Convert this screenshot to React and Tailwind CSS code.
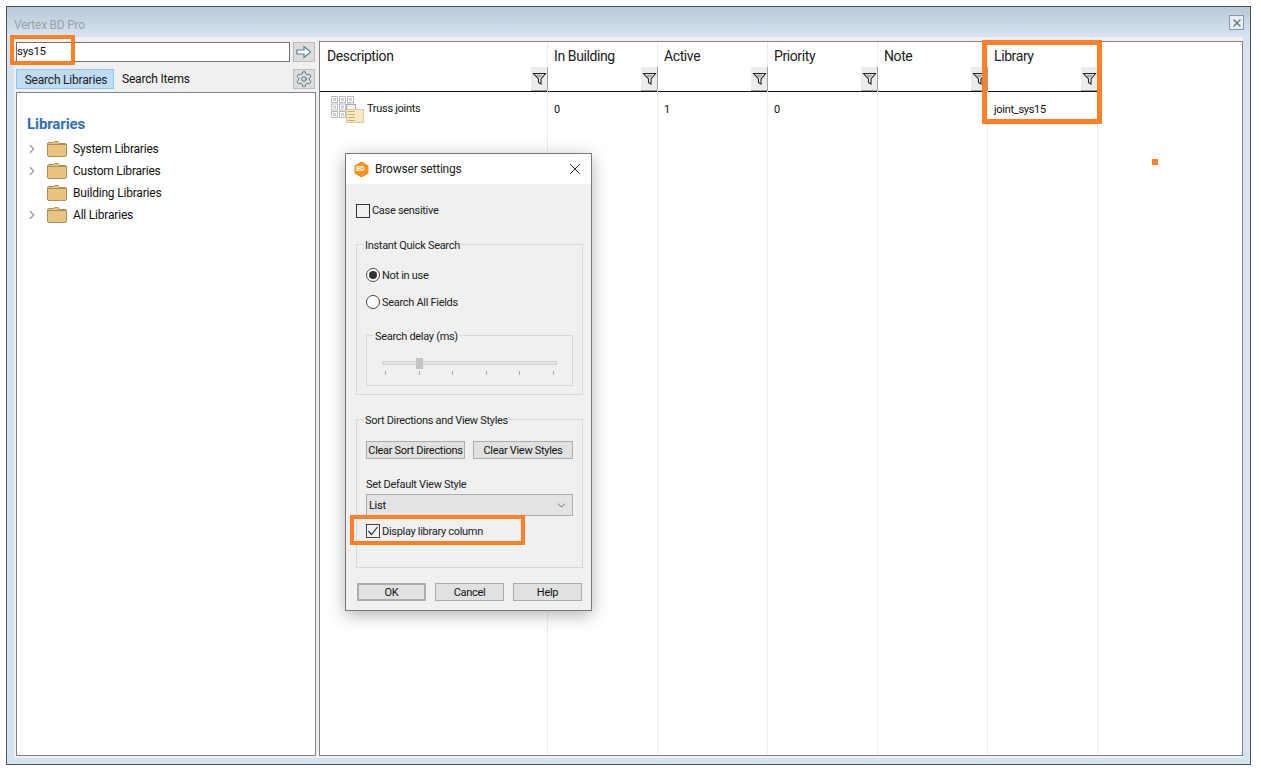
import React from "react";
import { ChevronRight, ChevronDown, X, Settings } from "lucide-react";

function Filter() {
  return (
    <div className="w-[17px] h-[24px] -mr-px bg-[#ececec] border-r border-b border-[#a0a0a0] flex items-center justify-center">
      <svg width="15" height="15" viewBox="0 0 15 15" fill="none">
        <path d="M1.5 2.5 H13.5 L9 8 V13 L6.5 11.5 V8 Z" fill="#fff" stroke="#222" strokeWidth="1.1" />
        <path d="M3.5 3.5 H11 L8.5 6.5 H6 Z" fill="#aaa" />
      </svg>
    </div>
  );
}

function Folder() {
  return (
    <svg width="20" height="16" viewBox="0 0 20 16" className="shrink-0">
      <path d="M.5 3 Q.5 1.5 2 1.5 H6.5 L8 0.5 H11 L12 2.5 H18 Q19.5 2.5 19.5 4 V14 Q19.5 15.5 18 15.5 H2 Q.5 15.5 .5 14 Z" fill="#e9c47f" stroke="#b08d5c" />
      <path d="M.5 3.5 H19.5" stroke="#b08d5c" strokeWidth="1" />
    </svg>
  );
}

function TreeRow({ label, arrow = true }) {
  return (
    <div className="flex items-center h-[22px]">
      <div className="w-[29px] pl-[7px] shrink-0">
        {arrow && <ChevronRight size={14} strokeWidth={2.2} className="text-[#9a9a9a]" />}
      </div>
      <Folder />
      <span className="ml-[6px] text-[12px] tracking-[-0.2px] text-[#111]">{label}</span>
    </div>
  );
}

function Col({ title, width, cell, cellClass = "", children }) {
  return (
    <div className={`${width} shrink-0 flex flex-col border-r border-[#e8eef5]`}>
      <div className="h-[50px] shrink-0 border-b border-[#111] flex flex-col pl-[6px]">
        <div className="text-[14px] tracking-[-0.4px] leading-[19px] pt-[5px] text-[#222] h-[25px]">{title}</div>
        <div className="flex justify-end"><Filter /></div>
      </div>
      <div className={`pl-[6px] pt-[10px] text-[11px] tracking-[-0.3px] leading-[15px] text-[#111] ${cellClass}`}>{cell}{children}</div>
    </div>
  );
}

function TrussIcon() {
  const cells = [0, 1, 2, 3, 4, 5, 6, 7, 8];
  return (
    <div className="relative w-[36px] h-[28px] shrink-0">
      <svg width="36" height="28" viewBox="0 0 36 28">
        {cells.map((c) => (
          <rect key={c} x={1.5 + (c % 3) * 8} y={.5 + Math.floor(c / 3) * 7.5} width="6" height="6" fill="#fff" stroke="#bcbcbc" />
        ))}
        {cells.map((c) => (
          <rect key={"i" + c} x={3 + (c % 3) * 8} y={2 + Math.floor(c / 3) * 7.5} width="3" height="3" fill="#cfcfcf" />
        ))}
        <rect x="16.5" y="8.5" width="9" height="18" fill="#f3f3f3" stroke="#a9a9a9" />
        <rect x="16.5" y="13.5" width="17" height="13" fill="#f8e8c8" stroke="#dcc79f" />
        <path d="M18 15.5h7M18 18.5h7M18 21.5h7M18 24.5h7" stroke="#cdb25e" />
      </svg>
    </div>
  );
}

function Legend({ children, className = "" }) {
  return <div className={`absolute -top-[7px] left-[7px] bg-[#f0f0f0] px-px leading-[15px] text-[#222] whitespace-nowrap ${className}`}>{children}</div>;
}

function Btn({ children, className = "" }) {
  return <div className={`h-[18px] flex items-center justify-center bg-[#e1e1e1] border border-[#adadad] text-[#111] whitespace-nowrap pt-[2px] ${className}`}>{children}</div>;
}

function Dialog() {
  return (
    <div className="absolute left-[345px] top-[153px] w-[247px] h-[458px] bg-[#f0f0f0] border border-[#777] shadow-[0_4px_16px_rgba(0,0,0,0.3)] text-[11px] tracking-[-0.3px] flex flex-col">
      <div className="h-[30px] bg-white shrink-0 flex items-center pl-[7px] pr-[7px]">
        <svg width="17" height="17" viewBox="0 0 17 17" className="shrink-0">
          <path d="M8.5 .5 L15.5 4.5 V12.5 L8.5 16.5 L1.5 12.5 V4.5 Z" fill="#f6921e" />
        </svg>
        <span className="absolute left-[10px] top-[11px] text-[6.5px] tracking-normal font-bold leading-[8px] text-white">BD</span>
        <span className="ml-[5px] text-[12px] tracking-[-0.2px] text-[#222]">Browser settings</span>
        <X size={18} strokeWidth={1.2} className="ml-auto text-[#111]" />
      </div>
      <div className="flex-1 flex flex-col pl-[10px] pr-[8px]">
        <div className="flex items-center h-[15px] mt-[19px]">
          <div className="w-[14px] h-[14px] border border-[#333] bg-transparent" />
          <span className="ml-[2px] mt-[2px] text-[#222]">Case sensitive</span>
        </div>
        <div className="relative mt-[26px] h-[151px] border border-[#d9d9d9] px-[9px]">
          <Legend>Instant Quick Search</Legend>
          <div className="flex items-center h-[14px] mt-[23px]">
            <div className="w-[14px] h-[14px] rounded-full border border-[#444] bg-white flex items-center justify-center">
              <div className="w-[8px] h-[8px] rounded-full bg-[#333]" />
            </div>
            <span className="ml-[2px] mt-[2px] text-[#222]">Not in use</span>
          </div>
          <div className="flex items-center h-[14px] mt-[13px]">
            <div className="w-[14px] h-[14px] rounded-full border border-[#444] bg-white" />
            <span className="ml-[2px] mt-[2px] text-[#222]">Search All Fields</span>
          </div>
          <div className="relative mt-[26px] h-[51px] border border-[#d9d9d9] px-[15px]">
            <Legend>Search delay (ms)</Legend>
            <div className="relative mt-[25px] h-[4px] bg-[#e3e3e3] border border-[#d2d2d2]">
              <div className="absolute left-[33px] -top-[4px] w-[7px] h-[11px] bg-[#c4c4c4]" />
            </div>
            <div className="flex justify-between mt-[6px] px-[3px]">
              {[0, 1, 2, 3, 4, 5].map((i) => (
                <div key={i} className="w-px h-[4px] bg-[#a8a8a8]" />
              ))}
            </div>
          </div>
        </div>
        <div className="relative mt-[24px] h-[149px] border border-[#d9d9d9] px-[9px]">
          <Legend>Sort Directions and View Styles</Legend>
          <div className="flex gap-[8px] mt-[21px]">
            <Btn className="w-[100px]">Clear Sort Directions</Btn>
            <Btn className="w-[101px]">Clear View Styles</Btn>
          </div>
          <div className="mt-[18px] leading-[15px] text-[#222]">Set Default View Style</div>
          <div className="mt-[2px] w-[207px] h-[22px] bg-[#e3e3e3] border border-[#adadad] flex items-center px-[2px] text-[#111]">
            <span className="mt-[3px]">List</span>
            <ChevronDown size={13} strokeWidth={1.5} className="ml-auto mr-[2px] text-[#555]" />
          </div>
          <div className="flex items-center h-[14px] mt-[8px]">
            <div className="w-[14px] h-[14px] border border-[#444] bg-transparent flex items-center justify-center">
              <svg width="12" height="12" viewBox="0 0 12 12" fill="none"><path d="M1.5 6 L4.5 9.5 L10.5 2" stroke="#333" strokeWidth="1.2" /></svg>
            </div>
            <span className="ml-[2px] mt-[2px] text-[#222]">Display library column</span>
          </div>
        </div>
        <div className="flex justify-between mt-[15px] pl-px pr-px">
          <Btn className="w-[69px] border-2 border-[#0078d7]">OK</Btn>
          <Btn className="w-[69px]">Cancel</Btn>
          <Btn className="w-[69px]">Help</Btn>
        </div>
      </div>
    </div>
  );
}

export default function App() {
  return (
    <div className="relative w-[1261px] h-[775px] bg-white overflow-hidden pl-[6px] pt-[6px] font-['Roboto',sans-serif]">
      <div className="w-[1245px] h-[759px] border border-[#505050] bg-[#d6e3f1] flex flex-col">
        <div className="h-[30px] shrink-0 bg-gradient-to-b from-[#b9c9d9] to-[#d6e3f1] flex items-center pl-[7px] pr-[6px]">
          <span className="text-[12px] tracking-[-0.25px] mt-[6px] text-[#9aa0a6]">Vertex BD Pro</span>
          <div className="ml-auto mt-[1px] w-[15px] h-[15px] border border-[#8a97a3] bg-[#e6edf4] flex items-center justify-center">
            <X size={12} strokeWidth={3} className="text-[#6f7a85]" />
          </div>
        </div>
        <div className="flex-1 mx-[7px] mb-[6px] bg-[#f0f0f0] flex min-h-0">
          <div className="w-[302px] shrink-0 flex flex-col pl-[2px] pt-[5px] pb-[2px]">
            <div className="flex h-[20px]">
              <div className="w-[274px] border border-[#6f7378] bg-white text-[11.5px] tracking-[-0.3px] leading-[16px] text-[#111]">sys15</div>
              <div className="ml-[3px] w-[22px] h-[20px] bg-[#dcdcdc] border border-[#bcbcbc] flex items-center justify-center">
                <svg width="16" height="14" viewBox="0 0 16 14" fill="none"><path d="M1 5 H8 V1.5 L14.5 7 L8 12.5 V9 H1 Z" fill="#fff" stroke="#5c8197" strokeWidth="1.2" /></svg>
              </div>
            </div>
            <div className="flex items-center h-[21px] mt-[6px]">
              <div className="w-[98px] h-[20px] mt-px pt-px pl-[2px] bg-[#bfdcf4] border border-[#8fc5ee] flex items-center justify-center text-[12px] tracking-[-0.2px] text-[#222]">Search Libraries</div>
              <span className="ml-[8px] text-[12px] tracking-[-0.2px] text-[#111]">Search Items</span>
              <div className="ml-auto mr-px w-[22px] h-[20px] bg-[#dcdcdc] border border-[#bcbcbc] flex items-center justify-center">
                <Settings size={18} strokeWidth={1.2} className="text-[#456b80]" />
              </div>
            </div>
            <div className="flex-1 mt-[3px] border border-[#7f8389] bg-white pl-[1px] pt-[21px]">
              <div className="pl-[9px] text-[15px] tracking-[-0.1px] leading-[20px] font-bold text-[#2f6fb7]">Libraries</div>
              <div className="mt-[4px]">
                <TreeRow label="System Libraries" />
                <TreeRow label="Custom Libraries" />
                <TreeRow label="Building Libraries" arrow={false} />
                <TreeRow label="All Libraries" />
              </div>
            </div>
          </div>
          <div className="ml-[3px] mt-[4px] flex-1 border border-[#7f8389] bg-white flex mb-[2px]">
            <Col title="Description" width="w-[228px] [&>div:first-child]:pl-[7px]" cellClass="!pl-[10px] !pt-[4px] flex items-center">
              <TrussIcon />
              <span className="ml-px mt-[-4px]">Truss joints</span>
            </Col>
            <Col title="In Building" width="w-[110px]" cell="0" />
            <Col title="Active" width="w-[110px]" cell="1" />
            <Col title="Priority" width="w-[110px]" cell="0" />
            <Col title="Note" width="w-[110px]" cell="" />
            <Col title="Library" width="w-[110px]" cell="joint_sys15" />
          </div>
        </div>
      </div>

      <Dialog />

      <div className="absolute left-[10px] top-[35px] w-[65px] h-[30px] border-[4px] border-[#ff8026]" />
      <div className="absolute left-[982px] top-[40px] w-[120px] h-[84px] border-[5px] border-[#ff8026]" />
      <div className="absolute left-[350px] top-[515px] w-[175px] h-[30px] border-[4px] border-[#ff8026]" />
      <div className="absolute left-[1152px] top-[159px] w-[6px] h-[6px] bg-[#ff8026]" />
    </div>
  );
}
